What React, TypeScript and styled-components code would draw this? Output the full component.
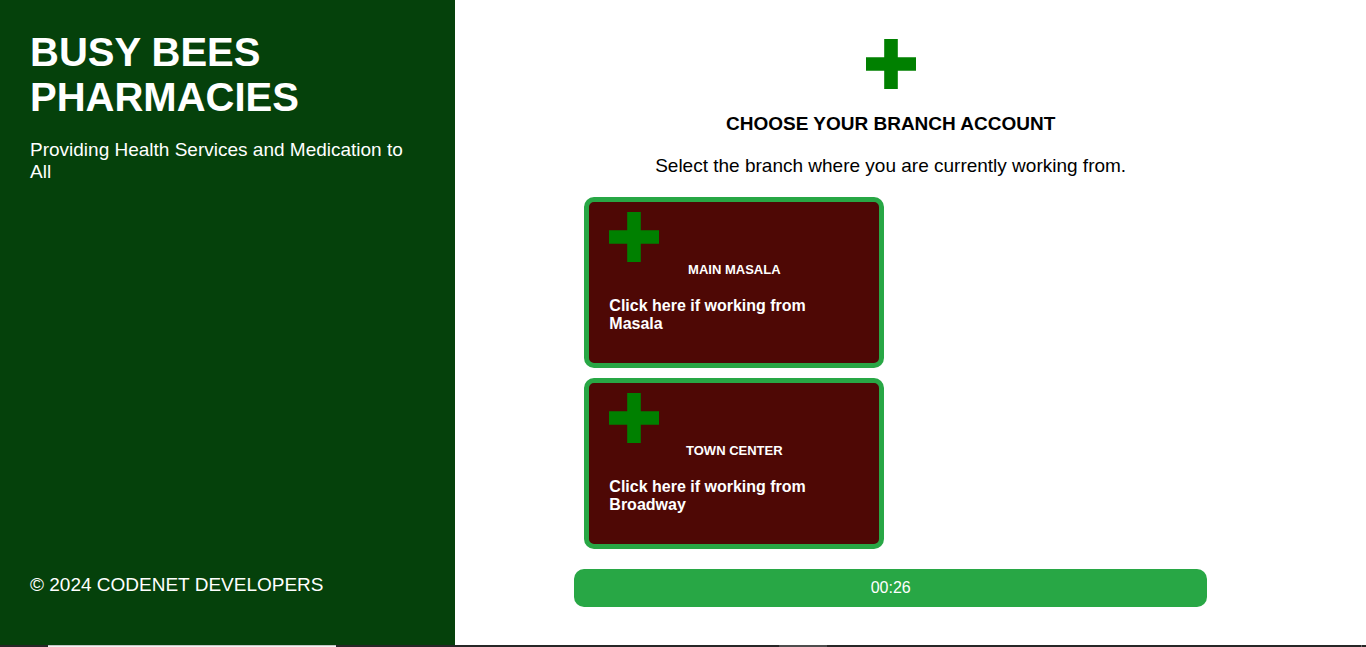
import React, { useEffect } from "react";
import styled, { createGlobalStyle } from "styled-components";

const GlobalStyle = createGlobalStyle`
  *, *::before, *::after { box-sizing: border-box; }
  body {
    margin: 0;
    background: #fff;
    color: #000;
    font-family: Arial, "Liberation Sans", sans-serif;
    font-size: 19px;
    line-height: 22px;
  }
  h1, h2, p { margin: 0; }
`;

const Page = styled.div`
  display: flex;
  flex-direction: column;
  min-height: 100vh;
`;

const Columns = styled.div`
  display: grid;
  grid-template-columns: 1fr 2fr;
  flex: 1;
`;

const Sidebar = styled.aside`
  display: flex;
  flex-direction: column;
  gap: 19px;
  padding: 30px 30px 49px;
  background: #05410b;
  color: #fff;
`;

const Brand = styled.h1`
  font-size: 40px;
  line-height: 45px;
`;

const Copyright = styled.footer`
  margin-top: auto;
`;

const Content = styled.main`
  display: flex;
  flex-direction: column;
  gap: 20px;
  padding: 39px 159px 38px 119px;
`;

const Intro = styled.header`
  display: flex;
  flex-direction: column;
  align-items: center;
  gap: 20px;
  text-align: center;
`;

const Title = styled.h2`
  font-size: 19px;
  line-height: 22px;
  padding-top: 4px;
`;

const Branches = styled.div`
  display: flex;
  flex-direction: column;
  gap: 10px;
  padding: 0 10px;
`;

const BranchCard = styled.button`
  display: flex;
  flex-direction: column;
  width: 300px;
  padding: 10px 20px 30px;
  border: 5px solid #28a745;
  border-radius: 10px;
  background: #4e0805;
  color: #fff;
  font: inherit;
  font-weight: bold;
  text-align: left;
  cursor: pointer;
`;

const BranchName = styled.span`
  align-self: center;
  margin-bottom: 20px;
  font-size: 13px;
  line-height: 15px;
`;

const BranchHint = styled.span`
  font-size: 16px;
  line-height: 18px;
`;

const Timer = styled.div`
  padding: 10px;
  border-radius: 10px;
  background: #28a745;
  color: #fff;
  font-size: 16px;
  line-height: 18px;
  text-align: center;
`;

const Taskbar = styled.div`
  display: flex;
  height: 2px;
  padding: 0 4px 0 48px;
  background: #272727;
`;

const SearchEdge = styled.div`
  width: 288px;
  border-top: 1px solid #c4c4c4;
  background: #f2f2f2;
`;

const ActiveApp = styled.div`
  width: 48px;
  margin-left: 443px;
  background: #4d4d4d;
`;

const DesktopEdge = styled.div`
  width: 1px;
  margin-left: auto;
  background: #6b6b6b;
`;

function Cross() {
  return (
    <svg width="50" height="50" viewBox="0 0 50 50" aria-hidden="true">
      <path
        d="M18.2 0H31.8V18.2H50V31.8H31.8V50H18.2V31.8H0V18.2H18.2Z"
        fill="#008000"
      />
    </svg>
  );
}

const branches = [
  { name: "MAIN MASALA", place: "Masala" },
  { name: "TOWN CENTER", place: "Broadway" },
];

export default function App() {
  useEffect(() => {
    document.title = "Busy Bees Pharmacies";
  }, []);

  return (
    <Page>
      <GlobalStyle />
      <Columns>
        <Sidebar>
          <Brand>BUSY BEES PHARMACIES</Brand>
          <p>Providing Health Services and Medication to All</p>
          <Copyright>© 2024 CODENET DEVELOPERS</Copyright>
        </Sidebar>
        <Content>
          <Intro>
            <Cross />
            <Title>CHOOSE YOUR BRANCH ACCOUNT</Title>
            <p>Select the branch where you are currently working from.</p>
          </Intro>
          <Branches>
            {branches.map(({ name, place }) => (
              <BranchCard key={name} type="button">
                <Cross />
                <BranchName>{name}</BranchName>
                <BranchHint>Click here if working from {place}</BranchHint>
              </BranchCard>
            ))}
          </Branches>
          <Timer role="timer">00:26</Timer>
        </Content>
      </Columns>
      <Taskbar aria-hidden="true">
        <SearchEdge />
        <ActiveApp />
        <DesktopEdge />
      </Taskbar>
    </Page>
  );
}
